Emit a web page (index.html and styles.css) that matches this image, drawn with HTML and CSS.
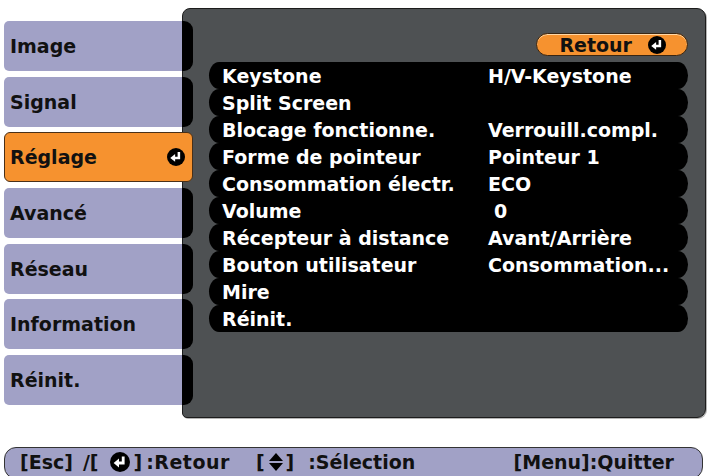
FILE: index.html
```html
<!DOCTYPE html>
<html lang="fr">
<head>
    <meta charset="UTF-8">
    <title>Réglage</title>
    <link rel="stylesheet" href="styles.css">
</head>
<body>
    <div class="screen">
        <div class="main">
            <nav class="tabs">
                <div class="tab">Image</div>
                <div class="tab">Signal</div>
                <div class="tab active">
                    <span>Réglage</span>
                    <svg class="enter" viewBox="0 0 20 20"><circle cx="10" cy="10" r="10" fill="#000"/><path d="M13.2 4.5 V11 H8" fill="none" stroke="#fff" stroke-width="2.8"/><polygon points="3.6,11 9,6.6 9,15.4" fill="#fff"/></svg>
                </div>
                <div class="tab">Avancé</div>
                <div class="tab">Réseau</div>
                <div class="tab">Information</div>
                <div class="tab">Réinit.</div>
            </nav>

            <div class="panel">
                <div class="panel-head">
                    <div class="back-btn">
                        <span>Retour</span>
                        <svg class="enter" viewBox="0 0 20 20"><circle cx="10" cy="10" r="10" fill="#000"/><path d="M13.2 4.5 V11 H8" fill="none" stroke="#fff" stroke-width="2.8"/><polygon points="3.6,11 9,6.6 9,15.4" fill="#fff"/></svg>
                    </div>
                </div>
                <div class="list">
                    <div class="row"><span class="label">Keystone</span><span class="value">H/V-Keystone</span></div>
                    <div class="row"><span class="label">Split Screen</span><span class="value"></span></div>
                    <div class="row"><span class="label">Blocage fonctionne.</span><span class="value">Verrouill.compl.</span></div>
                    <div class="row"><span class="label">Forme de pointeur</span><span class="value">Pointeur 1</span></div>
                    <div class="row"><span class="label">Consommation électr.</span><span class="value">ECO</span></div>
                    <div class="row"><span class="label">Volume</span><span class="value num">0</span></div>
                    <div class="row"><span class="label">Récepteur à distance</span><span class="value">Avant/Arrière</span></div>
                    <div class="row"><span class="label">Bouton utilisateur</span><span class="value">Consommation...</span></div>
                    <div class="row"><span class="label">Mire</span><span class="value"></span></div>
                    <div class="row"><span class="label">Réinit.</span><span class="value"></span></div>
                </div>
            </div>
        </div>

        <div class="help-bar">
            <span>[Esc]</span>
            <span class="slash">/[</span>
            <svg class="enter small" viewBox="0 0 20 20"><circle cx="10" cy="10" r="10" fill="#000"/><path d="M13.2 4.5 V11 H8" fill="none" stroke="#fff" stroke-width="2.8"/><polygon points="3.6,11 9,6.6 9,15.4" fill="#fff"/></svg>
            <span class="close">]</span>
            <span class="action">:Retour</span>
            <span class="open">[</span>
            <svg class="updown" viewBox="0 0 14 18"><polygon points="7,0 14,8 0,8" fill="#000"/><polygon points="0,10 14,10 7,18" fill="#000"/></svg>
            <span class="close tight">]</span>
            <span class="action wide">:Sélection</span>
            <span class="quit">[Menu]:Quitter</span>
        </div>
    </div>
</body>
</html>
```

FILE: styles.css
```css
:root {
    --lavender: #a1a1c6;
    --orange: #f6922f;
    --panel: #4e5153;
    --ink: #111;
}
* { box-sizing: border-box; }
body {
    margin: 0;
    width: 709px;
    height: 476px;
    overflow: hidden;
    background: #fff;
    font-family: "DejaVu Sans", "Liberation Sans", sans-serif;
    font-weight: bold;
    font-size: 19px;
}
.screen { padding: 8px 3px 0 4px; }
.main { display: flex; align-items: flex-start; }

.tabs {
    position: relative;
    z-index: 1;
    width: 178px;
    flex-shrink: 0;
    padding-top: 13px;
    display: flex;
    flex-direction: column;
    gap: 5.7px;
}
.tab {
    position: relative;
    width: 178px;
    height: 50px;
    padding-left: 6px;
    display: flex;
    align-items: center;
    background: var(--lavender);
    color: var(--ink);
    border-radius: 5px 0 0 5px;
}
.tab::after {
    content: '';
    position: absolute;
    left: 100%;
    top: 0;
    bottom: 0;
    width: 11px;
    background: #000;
    border-radius: 0 9px 9px 0;
}
.tab.active {
    width: 189px;
    justify-content: space-between;
    padding-right: 7px;
    background: var(--orange);
    border: 1px solid #4a3018;
    border-radius: 6px;
    padding-left: 5px;
}
.tab.active::after { display: none; }
.enter { width: 18px; height: 18px; display: block; }

.panel {
    width: 524px;
    height: 410px;
    background: var(--panel);
    border: 1px solid #1c1c1c;
    border-radius: 8px 9px 9px 5px;
    box-shadow: 1px 1px 0 #b5b5b5;
    padding: 24px 17px 0 26px;
}
.panel-head { display: flex; justify-content: flex-end; }
.back-btn {
    width: 152px;
    height: 23px;
    display: flex;
    align-items: center;
    justify-content: flex-end;
    gap: 16px;
    padding-right: 21px;
    background: var(--orange);
    color: var(--ink);
    border: 1px solid #3a2612;
    border-radius: 12px;
    box-shadow: inset 0 1px 0 #ffd7a6;
}
.list { margin-top: 6px; }
.row {
    display: flex;
    align-items: center;
    height: 27px;
    padding-left: 13px;
    background: #000;
    color: #fff;
    border-radius: 10px / 13.5px;
}
.label { width: 266px; }
.num { padding-left: 6px; }

.help-bar {
    margin: 29px 3px 0 0;
    height: 32px;
    display: flex;
    align-items: center;
    padding: 0 28px 2px 15px;
    background: var(--lavender);
    color: var(--ink);
    border: 1px solid #333;
    border-radius: 12px;
    white-space: nowrap;
}
.help-bar .slash { margin-left: 10px; }
.help-bar .enter.small { width: 20px; height: 20px; margin-left: 11px; }
.help-bar .close { margin-left: 4px; }
.help-bar .close.tight { margin-left: 3px; }
.help-bar .action { margin-left: 4px; letter-spacing: 0.5px; }
.help-bar .action.wide { margin-left: 14px; letter-spacing: 0; }
.help-bar .open { margin-left: 26px; }
.updown { width: 14px; height: 18px; margin-left: 4px; }
.quit { margin-left: auto; }
```
